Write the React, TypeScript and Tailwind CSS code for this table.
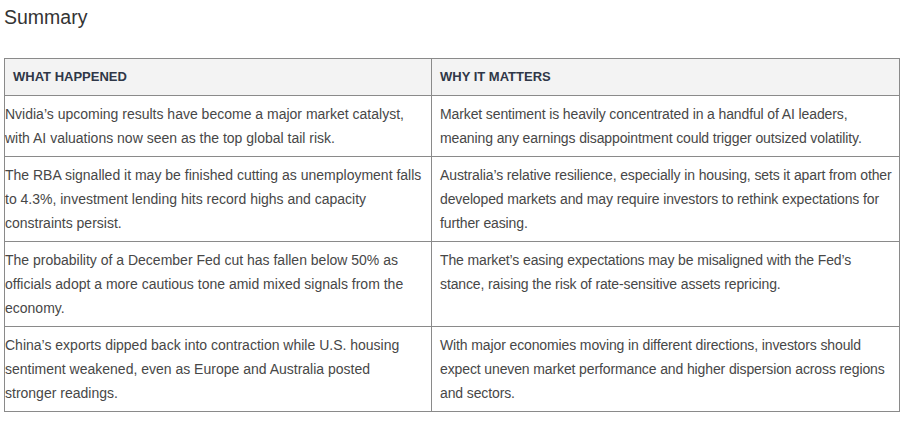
const rows: [string, string][] = [
  [
    "Nvidia’s upcoming results have become a major market catalyst, with AI valuations now seen as the top global tail risk.",
    "Market sentiment is heavily concentrated in a handful of AI leaders, meaning any earnings disappointment could trigger outsized volatility.",
  ],
  [
    "The RBA signalled it may be finished cutting as unemployment falls to 4.3%, investment lending hits record highs and capacity constraints persist.",
    "Australia’s relative resilience, especially in housing, sets it apart from other developed markets and may require investors to rethink expectations for further easing.",
  ],
  [
    "The probability of a December Fed cut has fallen below 50% as officials adopt a more cautious tone amid mixed signals from the economy.",
    "The market’s easing expectations may be misaligned with the Fed’s stance, raising the risk of rate-sensitive assets repricing.",
  ],
  [
    "China’s exports dipped back into contraction while U.S. housing sentiment weakened, even as Europe and Australia posted stronger readings.",
    "With major economies moving in different directions, investors should expect uneven market performance and higher dispersion across regions and sectors.",
  ],
];

export default function App() {
  return (
    <div className="w-[910px] h-[421px] bg-white font-['Liberation_Sans',Arial,sans-serif] overflow-hidden">
      <h2 className="pl-1 pt-[4px] text-[19.5px] leading-[26px] font-light text-[#333]">Summary</h2>

      <table className="mt-[28px] ml-1 w-[896px] border-collapse table-fixed">
        <colgroup>
          <col className="w-[427px]" />
          <col />
        </colgroup>
        <thead>
          <tr className="bg-[#f3f3f3] h-[37px]">
            <th className="border border-[#8a8a8a] px-2 text-left text-[13px] font-bold text-[#2f3747] uppercase">
              What happened
            </th>
            <th className="border border-[#8a8a8a] pl-[8px] pr-2 text-left text-[13px] font-bold text-[#2f3747] uppercase">
              Why it matters
            </th>
          </tr>
        </thead>
        <tbody>
          {rows.map(([what, why], i) => (
            <tr key={i}>
              <td className="border border-[#8a8a8a] pl-0 pr-[6px] pt-[6px] pb-[6px] align-top text-[14px] leading-[24px] text-[#474747]">
                {what}
              </td>
              <td className="border border-[#8a8a8a] pl-[8px] pr-0 pt-[6px] pb-[6px] align-top text-[14px] leading-[24px] tracking-[-0.12px] text-[#474747]">
                {why}
              </td>
            </tr>
          ))}
        </tbody>
      </table>
    </div>
  );
}
